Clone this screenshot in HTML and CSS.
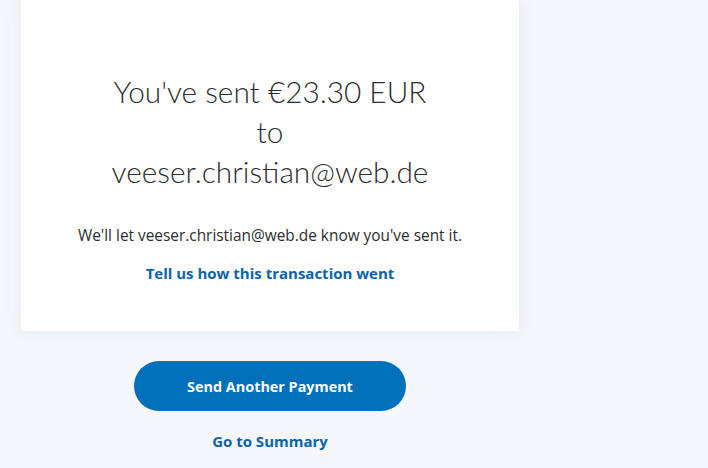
FILE: index.html
```html
<!DOCTYPE html>
<html lang="en">
<head>
<meta charset="utf-8">
<title>Payment sent</title>
<link rel="stylesheet" href="styles.css">
</head>
<body>
<main class="page">
  <section class="card">
    <h1 class="headline">You've sent €23.30 EUR<br>to<br>veeser.christian@web.de</h1>
    <p class="note">We'll let veeser.christian@web.de know you've sent it.</p>
    <a class="link" href="#">Tell us how this transaction went</a>
  </section>
  <div class="actions">
    <a class="btn" href="#">Send Another Payment</a>
    <a class="link summary" href="#">Go to Summary</a>
  </div>
</main>
</body>
</html>
```
FILE: styles.css
```css
html, body {
  margin: 0;
  padding: 0;
  background: #f5f7fa;
  height: 100%;
  overflow: hidden;
}
body {
  font-family: "Open Sans", "Lato", sans-serif;
  color: #2c2e2f;
}
.page {
  width: 498px;
  margin-left: 21px;
  display: flex;
  flex-direction: column;
  align-items: center;
}
.card {
  box-sizing: border-box;
  width: 498px;
  height: 331px;
  background: #ffffff;
  box-shadow: 0 0 16px rgba(190, 200, 215, 0.3);
  display: flex;
  flex-direction: column;
  align-items: center;
  padding-top: 72px;
}
.headline {
  margin: 0;
  font-family: "Lato", sans-serif;
  font-weight: 300;
  font-size: 29.8px;
  line-height: 40px;
  text-align: center;
  color: #2c2e2f;
}
.note {
  margin: 34px 0 0;
  font-size: 15.4px;
  line-height: 20px;
  color: #2c2e2f;
}
.link {
  display: block;
  margin-top: 17px;
  font-weight: 700;
  font-size: 15px;
  line-height: 20px;
  color: #0c64a8;
  text-decoration: none;
}
.actions {
  display: flex;
  flex-direction: column;
  align-items: center;
  padding-top: 30px;
}
.btn {
  box-sizing: border-box;
  width: 272px;
  height: 50px;
  border-radius: 25px;
  background: #0070ba;
  color: #ffffff;
  font-weight: 700;
  font-size: 14.4px;
  display: flex;
  align-items: center;
  justify-content: center;
  text-decoration: none;
}
.summary {
  margin-top: 20px;
}
```
